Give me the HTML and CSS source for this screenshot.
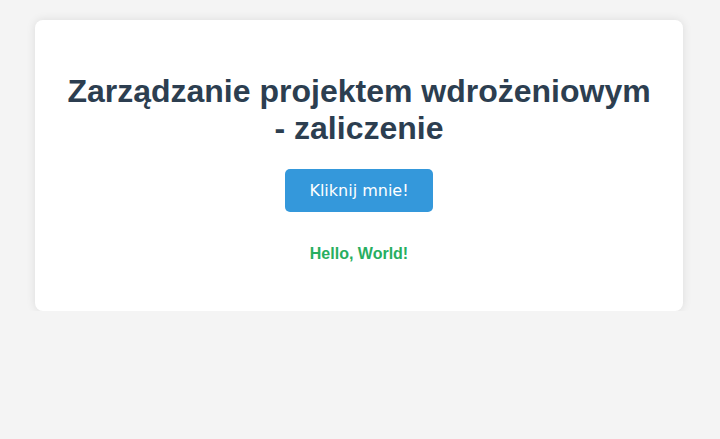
FILE: index.html
```html
<!DOCTYPE html>
<html lang="pl">
<head>
<meta charset="utf-8">
<title>Zarządzanie projektem wdrożeniowym</title>
<link rel="stylesheet" href="styles.css">
</head>
<body>
<div class="card">
  <h1 class="title">Zarządzanie projektem wdrożeniowym - zaliczenie</h1>
  <button class="btn" type="button">Kliknij mnie!</button>
  <p class="message">Hello, World!</p>
</div>
</body>
</html>
```
FILE: styles.css
```css
html, body {
  margin: 0;
  padding: 0;
}
body {
  background: #f4f4f4;
  font-family: "Liberation Sans", Arial, sans-serif;
  padding: 20px 37px 0 35px;
}
.card {
  background: #ffffff;
  border-radius: 8px;
  box-shadow: 0 0 10px rgba(0, 0, 0, 0.1);
  padding: 32px;
  text-align: center;
}
.title {
  color: #2c3e50;
  font-size: 32px;
  font-weight: bold;
  margin: 21.44px 0;
}
.btn {
  background: #3498db;
  color: #ffffff;
  border: none;
  border-radius: 5px;
  padding: 12px 24px;
  font-family: "DejaVu Sans", sans-serif;
  font-size: 16px;
  cursor: pointer;
}
.message {
  color: #27ae60;
  font-weight: bold;
  font-size: 16px;
  margin: 33px 0 16px;
}
```
